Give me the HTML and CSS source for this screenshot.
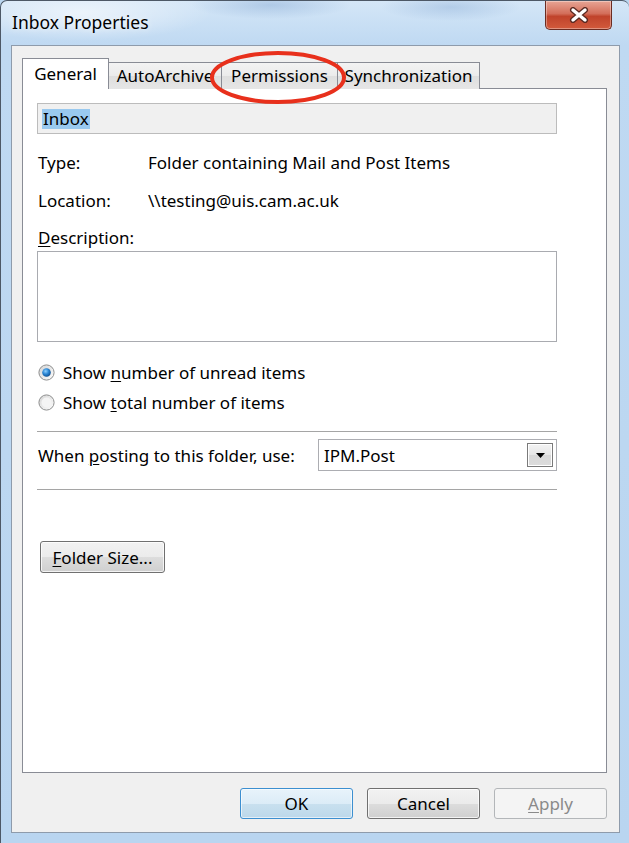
FILE: index.html
```html
<!DOCTYPE html>
<html lang="en">
<head>
 <meta charset="UTF-8">
 <meta name="viewport" content="width=device-width, initial-scale=1.0">
 <title>Inbox Properties</title>
 <link rel="stylesheet" href="styles.css">
</head>
<body>
 <div class="window">
 <div class="titlebar">
 <span class="title">Inbox Properties</span>
 <div class="close-btn">
 <svg width="20" height="16" viewBox="0 0 20 16">
 <path d="M4 3 L16 13 M16 3 L4 13" stroke="#5a2a22" stroke-width="6" stroke-linecap="round"/>
 <path d="M4 3 L16 13 M16 3 L4 13" stroke="#fff" stroke-width="3.4" stroke-linecap="round"/>
 </svg>
 </div>
 </div>

 <div class="client">
 <div class="tabs">
 <div class="tab active tab-general">General</div>
 <div class="tab tab-archive">AutoArchive</div>
 <div class="tab tab-perms">Permissions</div>
 <div class="tab tab-sync">Synchronization</div>
 <!-- red annotation ring round the Permissions tab -->
 <svg class="ring" width="138" height="55" viewBox="0 0 138 55">
 <ellipse cx="69" cy="27.5" rx="66" ry="24.5" fill="none" stroke="#e8301c" stroke-width="4"/>
 </svg>
 </div>

 <div class="panel">
 <div class="name-box"><span class="selected">Inbox</span></div>

 <div class="info">
 <div class="info-row"><span class="label">Type:</span><span>Folder containing Mail and Post Items</span></div>
 <div class="info-row"><span class="label">Location:</span><span>\\testing@uis.cam.ac.uk</span></div>
 </div>

 <div class="desc-label"><u>D</u>escription:</div>
 <div class="textarea"></div>

 <div class="radios">
 <div class="radio">
 <svg width="17" height="17" viewBox="0 0 17 17">
 <defs>
 <linearGradient id="rfill" x1="0" y1="0" x2="1" y2="1">
 <stop offset="0" stop-color="#d4d4d4"/>
 <stop offset="1" stop-color="#fdfdfd"/>
 </linearGradient>
 <radialGradient id="rdot" cx="0.4" cy="0.35" r="0.7">
 <stop offset="0" stop-color="#8fd0ff"/>
 <stop offset="0.5" stop-color="#2a86d4"/>
 <stop offset="1" stop-color="#0d4a8a"/>
 </radialGradient>
 </defs>
 <circle cx="8.5" cy="8.5" r="7.6" fill="url(#rfill)" stroke="#8e8f8f"/>
 <circle cx="8.5" cy="8.5" r="4.3" fill="url(#rdot)"/>
 </svg>
 <span>Show <u>n</u>umber of unread items</span>
 </div>
 <div class="radio">
 <svg width="17" height="17" viewBox="0 0 17 17">
 <circle cx="8.5" cy="8.5" r="7.6" fill="url(#rfill)" stroke="#8e8f8f"/>
 <circle cx="8.5" cy="8.5" r="5" fill="#f4f4f4"/>
 </svg>
 <span>Show <u>t</u>otal number of items</span>
 </div>
 </div>

 <hr class="sep">

 <div class="posting-row">
 <span>When <u>p</u>osting to this folder, use:</span>
 <div class="combo">
 <span>IPM.Post</span>
 <div class="combo-btn">
 <svg width="9" height="5" viewBox="0 0 9 5"><path d="M0 0 H9 L4.5 5 Z" fill="#000"/></svg>
 </div>
 </div>
 </div>

 <hr class="sep sep-low">

 <div class="btn folder-size"><span><u>F</u>older Size...</span></div>
 </div>

 <div class="dialog-buttons">
 <div class="btn default">OK</div>
 <div class="btn">Cancel</div>
 <div class="btn disabled"><span><u>A</u>pply</span></div>
 </div>
 </div>
 </div>
</body>
</html>
```

FILE: styles.css
```css
* {
box-sizing: border-box;
}
body {
margin: 0;
font-family: "Noto Sans", "Open Sans", sans-serif;
font-size: 17px;
color: #000;
background: #bad6f0;
}
u {
text-underline-offset: 2px;
}
.window {
width: 629px;
height: 843px;
display: flex;
flex-direction: column;
border-top: 1px solid #4d5866;
border-left: 1px solid #4d5866;
border-radius: 7px 7px 0 0;
padding: 0 9px 10px 10px;
background:
 radial-gradient(ellipse 130px 28px at 80px 12px, rgba(255,255,255,0.6), transparent),
 radial-gradient(ellipse 80px 14px at 270px 4px, rgba(110,150,200,0.35), transparent),
 radial-gradient(ellipse 70px 14px at 450px 6px, rgba(110,150,200,0.3), transparent),
 linear-gradient(#d4e6f7, #bfd9f2 44px, #b9d5f0);
}
.titlebar {
height: 44px;
display: flex;
justify-content: space-between;
align-items: flex-start;
}
.title {
margin: 11px 0 0 1px;
line-height: 20px;
font-size: 17.5px;
text-shadow: 0 0 6px rgba(255,255,255,0.9);
}
.close-btn {
width: 67px;
height: 29px;
margin-right: 8px;
display: flex;
align-items: center;
justify-content: center;
border: 1px solid #6b2c22;
border-top: none;
border-radius: 0 0 5px 5px;
background: linear-gradient(#e7a595, #d36e5a 45%, #c0432b 55%, #d25a3c);
box-shadow: inset 0 0 0 1px rgba(255,255,255,0.35);
}
.client {
height: 788px;
display: flex;
flex-direction: column;
border: 1px solid #8e9bab;
background: #f0f0f0;
padding: 12px 12px 13px 10px;
}
.tabs {
position: relative;
display: flex;
align-items: flex-end;
height: 31px;
margin-bottom: -1px;
}
.tab {
height: 27px;
line-height: 25px;
text-align: center;
margin-right: -1px;
border: 1px solid #898c95;
border-bottom: none;
background: linear-gradient(#f3f3f3, #ebebeb 50%, #dedede 50%, #e6e6e6);
}
.tab.active {
position: relative;
z-index: 1;
height: 31px;
line-height: 29px;
background: #fff;
}
.tab-general {
width: 87px;
}
.tab-archive {
width: 114px;
}
.tab-perms {
width: 117px;
}
.tab-sync {
width: 143px;
}
.ring {
position: absolute;
left: 187px;
top: -8px;
z-index: 2;
}
.panel {
flex: 1;
display: flex;
flex-direction: column;
background: #fff;
border: 1px solid #898c95;
padding: 14px 49px 0 14px;
}
.name-box {
height: 31px;
display: flex;
align-items: center;
padding-left: 4px;
background: #f0f0f0;
border: 1px solid #bcbcbc;
}
.selected {
background: #99c9ef;
line-height: 20px;
padding: 0 1px;
}
.info {
margin-top: 9px;
}
.info-row {
height: 38px;
display: flex;
align-items: center;
padding-left: 1px;
}
.label {
width: 110px;
}
.desc-label {
margin-top: 9px;
margin-bottom: 3px;
line-height: 20px;
padding-left: 1px;
}
.textarea {
height: 91px;
background: #fff;
border: 1px solid #a9abb0;
}
.radios {
margin-top: 15px;
}
.radio {
height: 30px;
display: flex;
align-items: center;
gap: 8px;
padding-left: 1px;
}
.sep {
border: 0;
border-top: 1px solid #a5a5a5;
margin: 14px 0 0;
height: 0;
}
.sep-low {
margin-top: 18px;
}
.posting-row {
margin-top: 7px;
display: flex;
justify-content: space-between;
align-items: center;
padding-left: 1px;
}
.combo {
width: 239px;
height: 32px;
display: flex;
align-items: center;
justify-content: space-between;
padding: 0 3px 0 5px;
background: #fff;
border: 1px solid #acadb2;
}
.combo-btn {
width: 26px;
height: 24px;
display: flex;
align-items: center;
justify-content: center;
border: 1px solid #7a7a7a;
background: linear-gradient(#f3f3f3, #e6e6e6 50%, #d8d8d8 50%, #dcdcdc);
box-shadow: inset 0 0 0 1px #fff;
}
.btn {
height: 31px;
width: 113px;
display: flex;
align-items: center;
justify-content: center;
border: 1px solid #707070;
border-radius: 3px;
background: linear-gradient(#f2f2f2, #ebebeb 50%, #dddddd 50%, #cfcfcf);
box-shadow: inset 0 0 0 1px rgba(255,255,255,0.75);
}
.folder-size {
align-self: flex-start;
width: 125px;
height: 32px;
margin: 51px 0 0 3px;
}
.dialog-buttons {
margin-top: 15px;
display: flex;
justify-content: flex-end;
gap: 14px;
}
.btn.default {
border-color: #3c8fd0;
background: linear-gradient(#e8f3fb, #dcecf7 50%, #c9e0ef 50%, #bcd8ea);
box-shadow: inset 0 0 0 1px rgba(255,255,255,0.6);
}
.btn.disabled {
border-color: #b3b6b9;
background: #f4f4f4;
color: #8a8a8a;
box-shadow: none;
}
```
